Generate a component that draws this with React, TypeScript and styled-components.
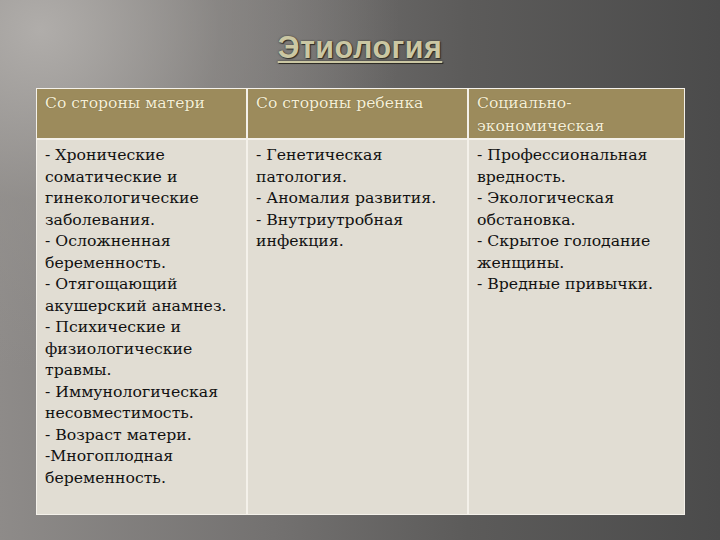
import styled, { createGlobalStyle } from "styled-components"

const GlobalStyle = createGlobalStyle`
    html, body {
        margin: 0;
        padding: 0;
    }
    body {
        width: 720px;
        height: 540px;
        overflow: hidden;
    }
`

const columns = [
    {
        title: "Со стороны матери",
        items: [
            "- Хронические соматические  и гинекологические заболевания.",
            "- Осложненная беременность.",
            "- Отягощающий акушерский анамнез.",
            "- Психические и физиологические травмы.",
            "- Иммунологическая несовместимость.",
            "- Возраст матери.",
            "-Многоплодная беременность.",
        ],
    },
    {
        title: "Со стороны ребенка",
        items: ["- Генетическая патология.", "- Аномалия развития.", "- Внутриутробная инфекция."],
    },
    {
        title: "Социально-экономическая",
        items: [
            "- Профессиональная вредность.",
            "- Экологическая обстановка.",
            "- Скрытое голодание женщины.",
            "- Вредные привычки.",
        ],
    },
]

const App = () => {
    return (
        <Slide>
            <GlobalStyle />
            <Title>Этиология</Title>
            <Table>
                {columns.map((c) => (
                    <HeadCell key={c.title}>{c.title}</HeadCell>
                ))}
                {columns.map((c) => (
                    <BodyCell key={c.title + "b"}>
                        {c.items.map((t) => (
                            <div key={t}>{t}</div>
                        ))}
                    </BodyCell>
                ))}
            </Table>
        </Slide>
    )
}

const Slide = styled.div`
    width: 720px;
    height: 540px;
    box-sizing: border-box;
    padding: 30px 36px 0 36px;
    display: flex;
    flex-direction: column;
    align-items: flex-start;
    background:
        radial-gradient(ellipse 360px 340px at 40px 30px, rgba(178,175,172,0.95) 0%, rgba(150,147,144,0.55) 50%, rgba(120,118,116,0) 100%),
        linear-gradient(to right, #8e8b89 0%, #737170 38%, #5c5b5a 65%, #4b4b4b 100%);
`

const Title = styled.h1`
    align-self: center;
    margin: 0 0 24px 0;
    font-family: "Liberation Sans", Arial, sans-serif;
    font-weight: bold;
    font-size: 30.5px;
    line-height: 34px;
    color: #cbc7a3;
    text-decoration: underline;
    text-decoration-thickness: 2px;
    text-underline-offset: 3px;
    text-shadow: 1px 1px 1px #2e2c26, 0 0 2px #3a3830;
    letter-spacing: 0.5px;
`

const Table = styled.div`
    display: grid;
    grid-template-columns: 209px 219px 215px;
    grid-template-rows: 49px 374px;
    gap: 2px;
    background: #f4f1ea;
    border: 1px solid #f4f1ea;
`

const HeadCell = styled.div`
    background: #9c8b5c;
    color: #f6efd6;
    font-family: "DejaVu Serif", "Liberation Serif", serif;
    font-size: 15.6px;
    line-height: 23px;
    padding: 3px 8px;
    text-shadow: 0 0 1px #6a5d38;
`

const BodyCell = styled.div`
    background: #e1ddd3;
    color: #111;
    font-family: "DejaVu Serif", "Liberation Serif", serif;
    font-size: 15.7px;
    line-height: 21.5px;
    padding: 4px 8px;
`

export default App
